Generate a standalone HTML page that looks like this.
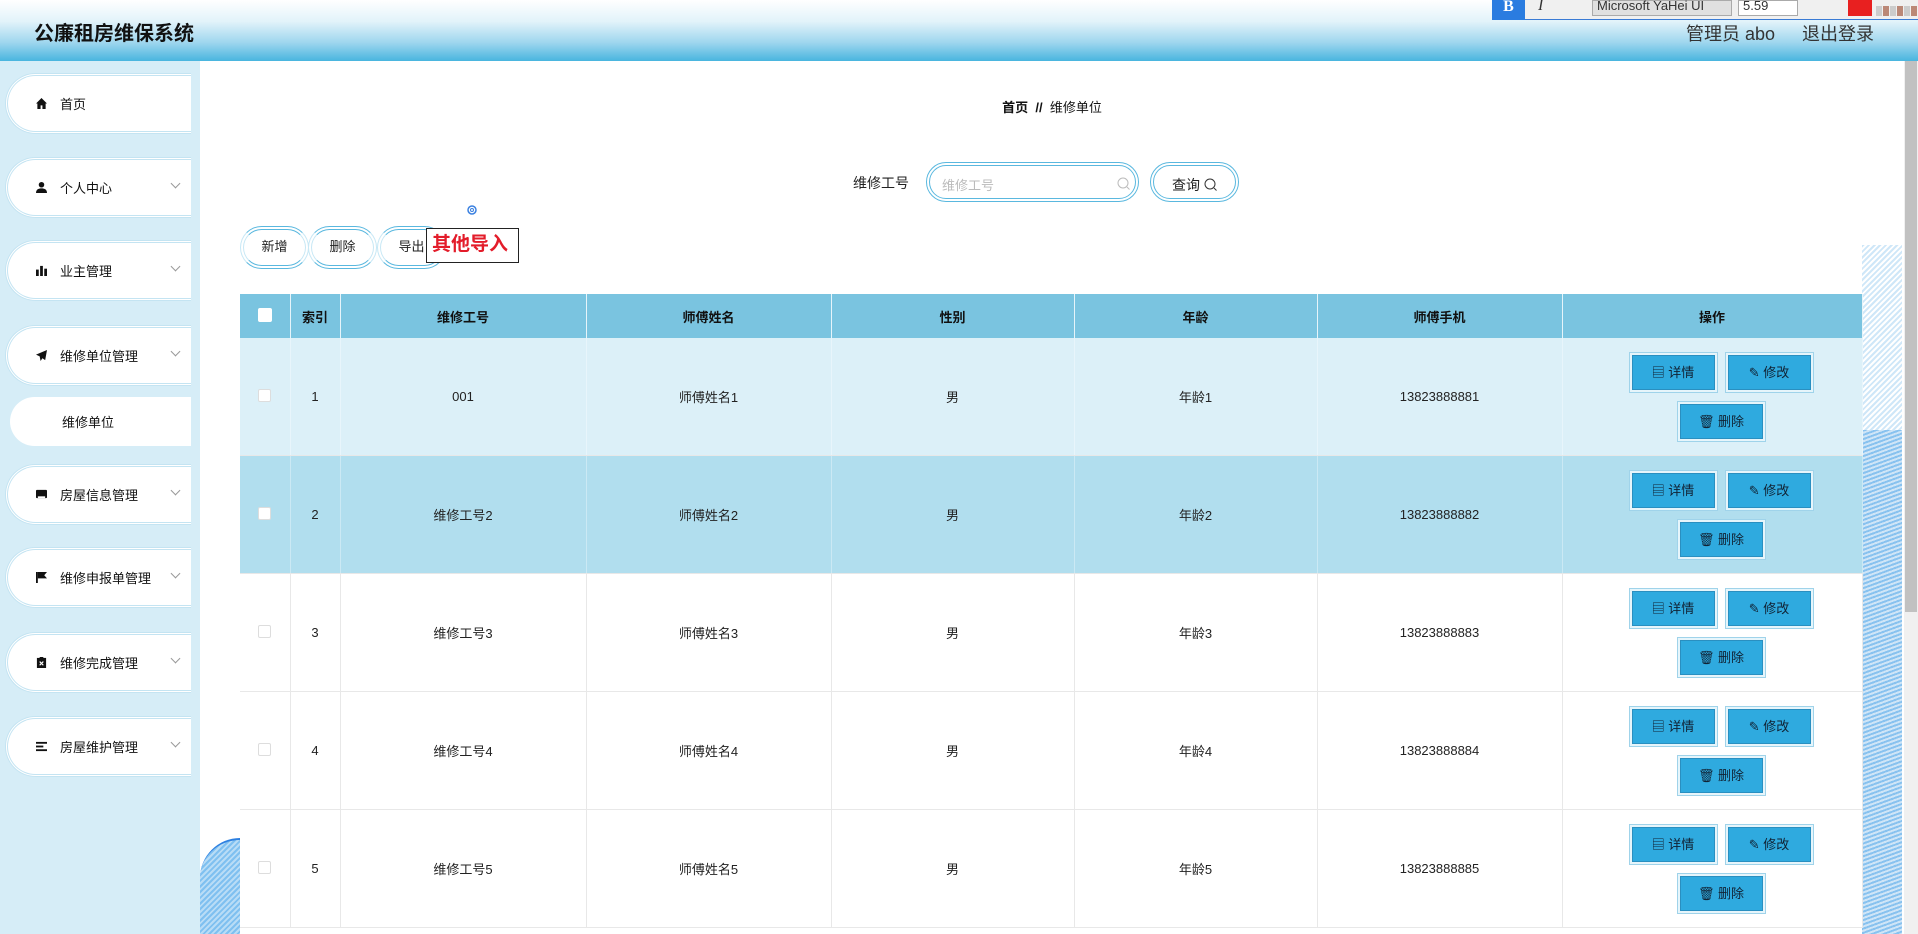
<!DOCTYPE html>
<html style="overflow:hidden"><head><meta charset="utf-8">
<style>
*{margin:0;padding:0;box-sizing:border-box}
html,body{width:1918px;height:934px;overflow:hidden}
body{background:#fff;font-family:"Liberation Sans","Noto Sans CJK SC",sans-serif;color:#333}
#w{position:relative;width:1918px;height:934px;overflow:hidden}
.hdr{position:absolute;left:0;top:0;width:1918px;height:61px;background:linear-gradient(#ffffff 0%,#e2f3fa 35%,#9ed6ee 70%,#49b5df 100%)}
.title{position:absolute;left:34px;top:17px;font-size:20px;font-weight:bold;color:#111}
.usr{position:absolute;top:20px;font-size:18px;color:#333}
.tb{position:absolute;left:1492px;top:0;width:426px;height:20px;background:#f0f0f0;border-bottom:1px solid #3a7bd5}
.side{position:absolute;left:0;top:61px;width:200px;height:873px;background:#d6edf7}
.mi{position:absolute;left:5px;width:186px;height:61px;background:#fff;border-radius:31px 0 0 31px;border:3px double #c4e4f2;border-right:none;font-size:13px;color:#111}
.mi .ic{position:absolute;left:28px;top:22px;width:11px;height:11px}
.mi .t{position:absolute;left:52px;top:18px}
.mi .ch{position:absolute;left:164px;top:20px;width:7px;height:7px;border-right:1px solid #999;border-bottom:1px solid #999;transform:rotate(45deg)}
.sub{position:absolute;left:10px;top:397px;width:181px;height:49px;background:#fff;border-radius:25px 0 0 25px;font-size:13px;color:#111}
.sub span{position:absolute;left:52px;top:15px}
.bc{position:absolute;left:0;width:2104px;top:97px;text-align:center;font-size:13px;color:#111}
.lbl{position:absolute;left:853px;top:173px;font-size:14px;color:#222}
.inp{position:absolute;left:926px;top:162px;width:213px;height:40px;border-radius:20px;border:4px double #5ab8df;background:#fff}
.inp span{position:absolute;left:12px;top:9px;font-size:13px;color:#bbb}
.qb{position:absolute;left:1150px;top:162px;width:89px;height:40px;border-radius:20px;border:4px double #5ab8df;background:#fff;font-size:14px;color:#222;padding:9px 0 0 18px}
.btn{position:absolute;top:226px;height:43px;width:69px;border-radius:22px;border:4px double #5ab8df;border-left-color:#c8e8f5;border-right-color:#c8e8f5;background:#fff;font-size:13px;color:#222;text-align:center;line-height:34px}
.imp{position:absolute;left:426px;top:228px;width:93px;height:35px;border:1px solid #222;background:#fff;color:#e31c2a;font-weight:bold;font-size:19px;line-height:32px;padding-left:5px}
table{position:absolute;left:240px;top:294px;border-collapse:collapse;table-layout:fixed;font-size:13px;color:#222}
th{height:44px;background:#7ac4e0;font-weight:bold;color:#111;border-right:1px solid #e6f4fa;text-align:center}
td{height:117px;text-align:center;border-right:1px solid #e8e8e8;border-bottom:1px solid #e8e8e8}
tr.r1 td{background:#dcf0f8;border-right-color:#e8f5fb}
tr.r2 td{background:#b1deee;border-right-color:#cbe9f4}
.cb{display:inline-block;width:13px;height:13px;border:1px solid #ddd;background:#fff;border-radius:2px}
th .cb{width:14px;height:14px;border-color:#fff}
.ab{display:inline-block;width:83px;height:35px;background:#2faadf;border:1px solid #2a8fc0;box-shadow:0 0 0 2px #e6f5fb,0 0 0 3px #9fd3ea;font-size:13px;color:#123;line-height:33px;margin:0 7px}
.acts{position:relative;height:117px}
.acts .a1{position:absolute;left:62px;top:17px}
.acts .a2{position:absolute;left:158px;top:17px}
.acts .a3{position:absolute;left:110px;top:66px}
.deco{position:absolute;left:1862px;top:245px;width:40px;height:689px;background:repeating-linear-gradient(135deg,#cfe7f8 0 2px,#ffffff 2px 4px)}
.deco2{position:absolute;left:1862px;top:430px;width:40px;height:504px;background:repeating-linear-gradient(160deg,#88c2ef 0 2px,#cfe5f7 2px 4px)}
.deco3{position:absolute;left:200px;top:838px;width:40px;height:96px;background:repeating-linear-gradient(135deg,#7fc0f0 0 2px,#b8dcf6 2px 4px);border-top:2px solid #2d7fe0;border-radius:40px 0 0 0}
.sb{position:absolute;left:1904px;top:61px;width:14px;height:873px;background:#f0f0f0}
.sb div{position:absolute;left:1px;top:0;width:12px;height:551px;background:#c1c1c1}
</style></head><body><div id="w">
<div class="hdr"></div>
<div class="title">公廉租房维保系统</div>
<div class="tb">
 <div style="position:absolute;left:0;top:0;width:33px;height:20px;background:#2a7ce0;color:#fff;font-weight:bold;text-align:center;font-family:'Liberation Serif';font-size:16px;line-height:14px">B</div>
 <div style="position:absolute;left:46px;top:-3px;font-style:italic;font-family:'Liberation Serif';font-size:16px">I</div>
 <div style="position:absolute;left:100px;top:0;width:140px;height:16px;background:#e0e0e0;border:1px solid #aaa;font-size:13px;line-height:10px;padding-left:4px">Microsoft YaHei UI</div>
 <div style="position:absolute;left:246px;top:0;width:60px;height:16px;background:#fff;border:1px solid #aaa;font-size:13px;line-height:10px;padding-left:4px">5.59</div>
 <div style="position:absolute;left:356px;top:0;width:24px;height:16px;background:#e82020"></div>
 <div style="position:absolute;left:384px;top:6px;width:42px;height:10px;background:repeating-linear-gradient(90deg,#ccc 0 6px,#f0f0f0 6px 7px,#b87 7px 13px,#f0f0f0 13px 14px)"></div>
</div>
<div class="usr" style="left:1686px">管理员 abo</div>
<div class="usr" style="left:1802px">退出登录</div>

<div class="side"></div>
<div class="mi" style="top:73px"><svg class="ic" viewBox="0 0 12 12"><path d="M6 0L0 6h1.5v6h3.5V8h2v4h3.5V6H12z" fill="#111"/></svg><span class="t">首页</span></div>
<div class="mi" style="top:157px"><svg class="ic" viewBox="0 0 12 12"><circle cx="6" cy="3" r="3" fill="#111"/><path d="M0 12c0-4 3-5 6-5s6 1 6 5z" fill="#111"/></svg><span class="t">个人中心</span><i class="ch"></i></div>
<div class="mi" style="top:240px"><svg class="ic" viewBox="0 0 12 12"><rect x="0" y="5" width="3" height="7" fill="#111"/><rect x="4.5" y="1" width="3" height="11" fill="#111"/><rect x="9" y="4" width="3" height="8" fill="#111"/></svg><span class="t">业主管理</span><i class="ch"></i></div>
<div class="mi" style="top:325px"><svg class="ic" viewBox="0 0 12 12"><path d="M12 0L0 5l4 2 1 5 2-3 3 2z" fill="#111"/></svg><span class="t">维修单位管理</span><i class="ch"></i></div>
<div class="sub"><span>维修单位</span></div>
<div class="mi" style="top:464px"><svg class="ic" viewBox="0 0 12 12"><rect x="0" y="1" width="12" height="9" rx="1" fill="#111"/><rect x="2" y="8" width="8" height="2" fill="#fff"/></svg><span class="t">房屋信息管理</span><i class="ch"></i></div>
<div class="mi" style="top:547px"><svg class="ic" viewBox="0 0 12 12"><rect x="0" y="0" width="2" height="12" fill="#111"/><path d="M2 0h10l-3 3.5 3 3.5H2z" fill="#111"/></svg><span class="t">维修申报单管理</span><i class="ch"></i></div>
<div class="mi" style="top:632px"><svg class="ic" viewBox="0 0 12 12"><rect x="1" y="1" width="10" height="11" fill="#111"/><rect x="4" y="0" width="4" height="2" fill="#111"/><path d="M4 5l4 4M8 5l-4 4" stroke="#fff" stroke-width="1.3"/></svg><span class="t">维修完成管理</span><i class="ch"></i></div>
<div class="mi" style="top:716px"><svg class="ic" viewBox="0 0 12 12"><rect x="0" y="1" width="12" height="2" fill="#111"/><rect x="0" y="5" width="8" height="2" fill="#111"/><rect x="0" y="9" width="12" height="2" fill="#111"/></svg><span class="t">房屋维护管理</span><i class="ch"></i></div>

<div class="deco3"></div>
<div class="deco"></div><div class="deco2"></div>

<div class="bc"><b>首页</b>&nbsp;&nbsp;<b>//</b>&nbsp;&nbsp;维修单位</div>
<div class="lbl">维修工号</div>
<div class="inp"><span>维修工号</span><svg style="position:absolute;left:187px;top:11px" width="13" height="13" viewBox="0 0 13 13"><circle cx="6" cy="6" r="5" fill="none" stroke="#bbb"/><path d="M10 10l2.5 2.5" stroke="#bbb"/></svg></div>
<div class="qb">查询 <svg width="13" height="13" viewBox="0 0 13 13" style="vertical-align:-1px"><circle cx="6" cy="6" r="5" fill="none" stroke="#333"/><path d="M10 10l2.5 2.5" stroke="#333"/></svg></div>
<svg style="position:absolute;left:467px;top:205px" width="10" height="10" viewBox="0 0 10 10"><circle cx="5" cy="5" r="4" fill="none" stroke="#3a80e0" stroke-width="1.5"/><circle cx="5" cy="5" r="1.5" fill="none" stroke="#3a80e0"/></svg>
<div class="btn" style="left:240px">新增</div>
<div class="btn" style="left:308px">删除</div>
<div class="btn" style="left:377px">导出</div>
<div class="imp">其他导入</div>

<table>
<colgroup><col style="width:50px"><col style="width:50px"><col style="width:246px"><col style="width:245px"><col style="width:243px"><col style="width:243px"><col style="width:245px"><col style="width:300px"></colgroup>
<tr><th><span class="cb"></span></th><th>索引</th><th>维修工号</th><th>师傅姓名</th><th>性别</th><th>年龄</th><th>师傅手机</th><th>操作</th></tr>
<tr class="r1"><td><span class="cb"></span></td><td>1</td><td>001</td><td>师傅姓名1</td><td>男</td><td>年龄1</td><td>13823888881</td><td><div class="acts"><span class="ab a1">▤ 详情</span><span class="ab a2">✎ 修改</span><span class="ab a3">🗑 删除</span></div></td></tr>
<tr class="r2"><td><span class="cb"></span></td><td>2</td><td>维修工号2</td><td>师傅姓名2</td><td>男</td><td>年龄2</td><td>13823888882</td><td><div class="acts"><span class="ab a1">▤ 详情</span><span class="ab a2">✎ 修改</span><span class="ab a3">🗑 删除</span></div></td></tr>
<tr><td><span class="cb"></span></td><td>3</td><td>维修工号3</td><td>师傅姓名3</td><td>男</td><td>年龄3</td><td>13823888883</td><td><div class="acts"><span class="ab a1">▤ 详情</span><span class="ab a2">✎ 修改</span><span class="ab a3">🗑 删除</span></div></td></tr>
<tr><td><span class="cb"></span></td><td>4</td><td>维修工号4</td><td>师傅姓名4</td><td>男</td><td>年龄4</td><td>13823888884</td><td><div class="acts"><span class="ab a1">▤ 详情</span><span class="ab a2">✎ 修改</span><span class="ab a3">🗑 删除</span></div></td></tr>
<tr><td><span class="cb"></span></td><td>5</td><td>维修工号5</td><td>师傅姓名5</td><td>男</td><td>年龄5</td><td>13823888885</td><td><div class="acts"><span class="ab a1">▤ 详情</span><span class="ab a2">✎ 修改</span><span class="ab a3">🗑 删除</span></div></td></tr>
</table>
<div class="sb"><div></div></div>
</div></body></html>
